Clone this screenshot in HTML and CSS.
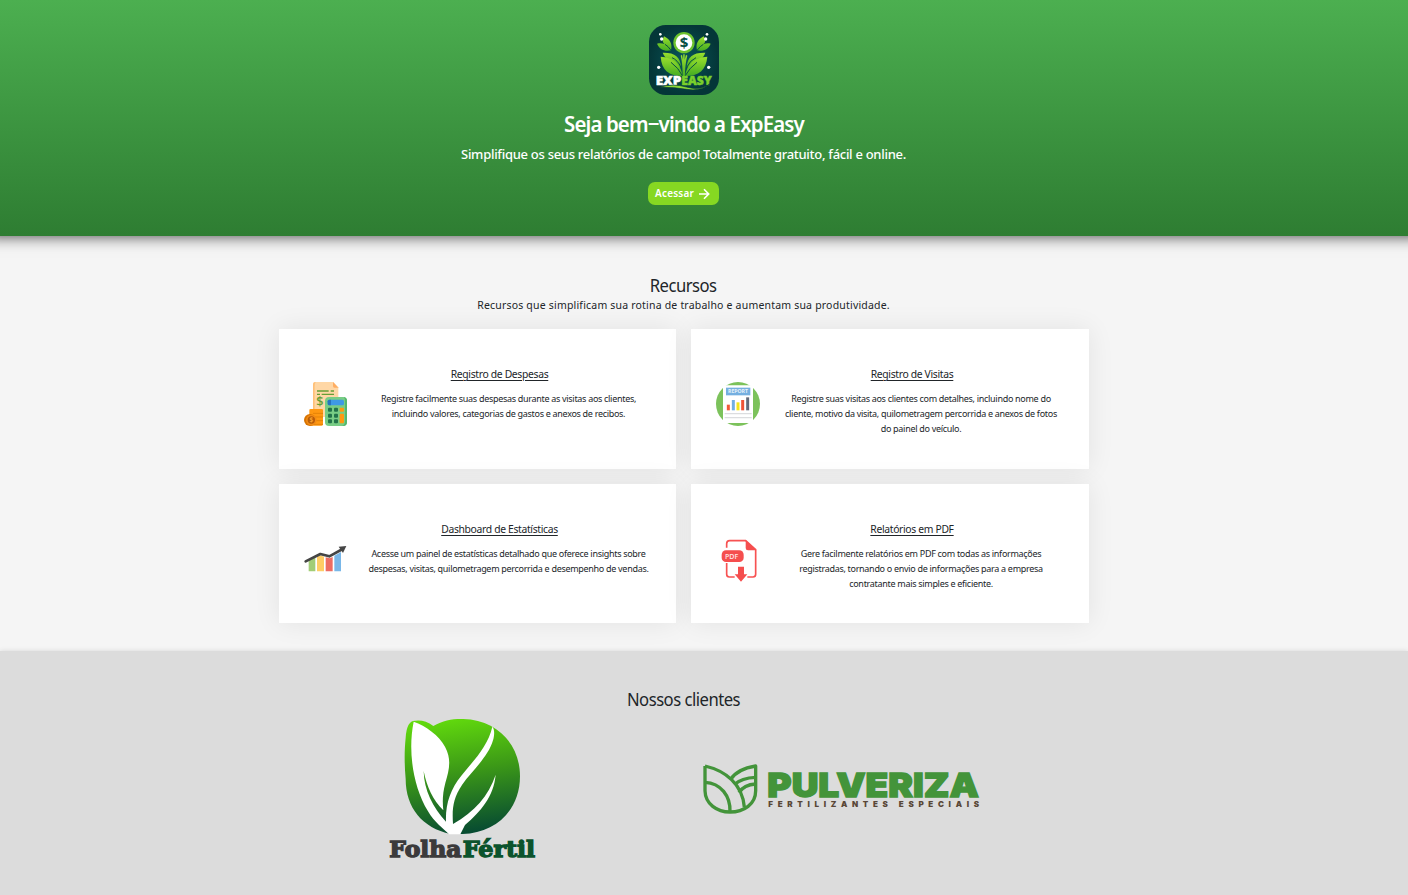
FILE: index.html
```html
<!DOCTYPE html>
<html lang="pt-BR">
<head>
<meta charset="utf-8">
<title>ExpEasy</title>
<link rel="stylesheet" href="styles.css">
</head>
<body>
<header class="hero">
  <svg class="hero-logo" viewBox="0 0 210 210">
    <defs>
      <linearGradient id="leaf" x1="0" y1="0" x2="0" y2="1"><stop offset="0" stop-color="#9be02d"/><stop offset="1" stop-color="#43ac22"/></linearGradient>
      <radialGradient id="night"><stop offset="0" stop-color="#08565a"/><stop offset="1" stop-color="#043638"/></radialGradient>
    </defs>
    <rect width="210" height="210" rx="50" fill="url(#night)"/>
    <g fill="url(#leaf)">
      <path d="M101 158C101 130 100 112 95 92L99 89 102 104 103 88H107V104L111 89 115 92C110 112 108 130 108 158Z"/>
      <path d="M96 127C94 95 77 82 41 83C50 103 66 121 96 127Z"/>
      <path d="M113 127C115 95 132 82 169 83C161 103 144 121 113 127Z"/>
      <path d="M101 153C95 115 72 98 35 95C38 135 59 153 101 153Z"/>
      <path d="M108 153C114 115 137 98 175 95C171 135 150 153 108 153Z"/>
      <path d="M66 76C71 57 63 43 45 34C39 46 41 54 48 58C39 54 32 54 24 56C31 72 47 81 66 76Z"/>
      <path d="M144 76C139 57 147 43 164 34C171 46 169 54 163 58C171 54 178 54 185 56C179 72 163 81 144 76Z"/>
    </g>
    <path d="M66 112Q88 128 101 153M144 112Q122 128 108 153M69 98Q86 105 96 127M141 98Q124 105 113 127M48 58Q57 63 66 76M163 58Q154 63 144 76" fill="none" stroke="#075044" stroke-width="3"/>
    <circle cx="105" cy="53" r="32" fill="#6cc22d"/><circle cx="105" cy="53" r="25" fill="#fff"/>
    <text class="logo-dollar" x="105" y="70" text-anchor="middle">$</text>
    <g fill="#fff"><circle cx="34" cy="28" r="4"/><circle cx="38" cy="42" r="5"/><circle cx="174" cy="28" r="4"/><circle cx="170" cy="42" r="5"/><circle cx="29" cy="127" r="5"/><circle cx="179" cy="127" r="5"/></g>
    <text class="logo-name" x="20" y="180" textLength="77" lengthAdjust="spacingAndGlyphs" fill="#fff" stroke="#fff">EXP</text>
    <text class="logo-name" x="97" y="180" textLength="91" lengthAdjust="spacingAndGlyphs" fill="#79cf2b" stroke="#79cf2b">EASY</text>
    <path d="M32 187Q72 174 112 186T183 177Q153 200 113 193T32 187Z" fill="#8bd936" stroke="#043638" stroke-width="2"/>
  </svg>
  <h1 class="hero-title">Seja bem−vindo a ExpEasy</h1>
  <p class="hero-text">Simplifique os seus relatórios de campo! Totalmente gratuito, fácil e online.</p>
  <a class="hero-button"><span>Acessar</span><svg class="arrow" viewBox="0 0 12 12"><path d="M1 6H10.5M6 1.3L10.7 6L6 10.7"/></svg></a>
</header>
<main class="features">
  <h2 class="section-title resources-title">Recursos</h2>
  <p class="section-text">Recursos que simplificam sua rotina de trabalho e aumentam sua produtividade.</p>
  <div class="grid">
    <article class="card">
      <svg class="card-icon" viewBox="0 0 132 132">
        <path d="M33 0H88L103 16V105H27V7Q27 0 33 0Z" fill="#ffd7a5"/><path d="M27 8Q27 0 35 0Q32 4 32 12V100H27Z" fill="#ffc078"/><path d="M87 0L103 17H91Q87 17 87 12Z" fill="#ffad62"/>
        <path d="M39 27H74M80 27H90M39 37H48M53 37H90" stroke="#659e35" stroke-width="4"/>
        <text class="receipt-dollar" x="37" y="73">$</text>
        <path d="M16 84Q16 81 20 81H53Q57 81 57 84V127Q57 131 53 131H20Q16 131 16 127Z" fill="#ff9811"/><path d="M27 94H57M27 105H57M27 116H57M27 127H57" stroke="#e58308" stroke-width="3"/>
        <circle cx="18" cy="114" r="18" fill="#d77300"/><circle cx="22" cy="114" r="16" fill="#f28b16"/><circle cx="22" cy="114" r="11" fill="#b65d08"/><text class="coin" x="22" y="121" text-anchor="middle">$</text>
        <rect x="63" y="45" width="66" height="87" rx="12" fill="#78cd85"/><path d="M117 45Q129 45 129 57V120Q129 132 117 132H111Q123 131 123 119V57Q123 46 117 45Z" fill="#54b66c"/>
        <rect x="71" y="53" width="49" height="17" rx="5" fill="#3e99e5"/><path d="M71 58Q71 53 76 53H81V70H76Q71 70 71 65Z" fill="#2874bd"/>
        <g fill="#22734a"><rect x="72" y="77" width="12" height="12" rx="3"/><rect x="90" y="77" width="12" height="12" rx="3"/><rect x="72" y="95" width="12" height="12" rx="3"/><rect x="90" y="95" width="12" height="12" rx="3"/><rect x="72" y="112" width="12" height="12" rx="3"/><rect x="90" y="112" width="12" height="12" rx="3"/></g>
        <rect x="107" y="77" width="13" height="12" rx="3" fill="#ff9811"/><rect x="107" y="95" width="13" height="29" rx="3" fill="#ff9811"/>
      </svg>
      <div class="card-body"><h3 class="card-title">Registro de Despesas</h3><p class="card-text">Registre facilmente suas despesas durante as visitas aos clientes,<br>incluindo valores, categorias de gastos e anexos de recibos.</p></div>
    </article>
    <article class="card">
      <svg class="card-icon" viewBox="0 0 132 132">
        <circle cx="66" cy="66" r="66" fill="#7cc25b"/><path d="M21 10H111V123H21Z" fill="#fff"/>
        <rect x="30" y="17" width="73" height="23" fill="#74afe0"/><text class="report" x="66" y="34" text-anchor="middle" textLength="60" lengthAdjust="spacingAndGlyphs">REPORT</text>
        <path d="M37 85V68" stroke="#f15a38" stroke-width="9"/><path d="M52 85V54" stroke="#72afe2" stroke-width="9"/><path d="M66 85V61" stroke="#f4e51c" stroke-width="9"/><path d="M80 85V54" stroke="#ef5336" stroke-width="9"/><path d="M95 85V46" stroke="#626a7a" stroke-width="9"/>
        <path d="M26 95H107M26 107H107" stroke="#dcdddf" stroke-width="4"/>
      </svg>
      <div class="card-body"><h3 class="card-title">Registro de Visitas</h3><p class="card-text">Registre suas visitas aos clientes com detalhes, incluindo nome do<br>cliente, motivo da visita, quilometragem percorrida e anexos de fotos<br>do painel do veículo.</p></div>
    </article>
    <article class="card">
      <svg class="card-icon" viewBox="0 0 132 132">
        <path d="M14 71L34 61V103H14Z" fill="#a2cd76"/><path d="M39 59L49 55 60 59V103H39Z" fill="#ffcd65"/><path d="M65 61L77 64 86 60V103H65Z" fill="#ed6c62"/><path d="M91 56L111 45V103H91Z" fill="#79b7e8"/>
        <path d="M5 73L49 51L76 58L116 36" fill="none" stroke="#454545" stroke-width="8" stroke-linecap="round" stroke-linejoin="round"/><path d="M104 29L127 27L117 48Z" fill="#454545"/>
      </svg>
      <div class="card-body"><h3 class="card-title">Dashboard de Estatísticas</h3><p class="card-text">Acesse um painel de estatísticas detalhado que oferece insights sobre<br>despesas, visitas, quilometragem percorrida e desempenho de vendas.</p></div>
    </article>
    <article class="card">
      <svg class="card-icon" viewBox="0 0 132 132">
        <path d="M32 32V20Q32 11 41 11H89L119 38V112Q119 120 111 120H94M32 78V112Q32 120 40 120H56" fill="none" stroke="#f75252" stroke-width="5"/>
        <path d="M89 9L121 40H96Q89 40 89 33Z" fill="#f54e4e"/><rect x="17" y="40" width="66" height="35" rx="13" fill="#f54e4e"/><text class="pdf" x="47" y="65" text-anchor="middle" textLength="40" lengthAdjust="spacingAndGlyphs">PDF</text>
        <path d="M66 89H84V112H94L75 134 56 112H66Z" fill="#f54e4e"/>
      </svg>
      <div class="card-body"><h3 class="card-title">Relatórios em PDF</h3><p class="card-text">Gere facilmente relatórios em PDF com todas as informações<br>registradas, tornando o envio de informações para a empresa<br>contratante mais simples e eficiente.</p></div>
    </article>
  </div>
</main>
<section class="clients">
  <h2 class="section-title clients-title">Nossos clientes</h2>
  <div class="client-list">
    <svg class="folha" viewBox="0 0 495 480">
      <defs><linearGradient id="folhaFill" x1=".4" y1="0" x2=".55" y2="1"><stop stop-color="#61d90d"/><stop offset=".45" stop-color="#3c9917"/><stop offset="1" stop-color="#064a32"/></linearGradient></defs>
      <path d="M77 83Q80 30 107 32Q134 29 160 48C190 31 219 26 250 27C351 30 420 102 420 199C420 302 345 370 248 372H212C127 354 77 293 77 207C73 165 73 120 77 83Z" fill="url(#folhaFill)"/>
      <path d="M101 35C137 47 178 77 195 110C216 148 207 181 196 219C188 249 187 275 190 301C158 269 141 232 131 183C132 241 159 293 198 335C196 282 211 238 244 197C277 155 323 112 337 50C345 59 343 77 339 91C324 143 274 183 246 225C219 265 216 296 219 342C285 304 325 258 347 194C341 260 302 304 255 345L241 373H207C190 355 163 337 144 304C99 230 83 123 101 35Z" fill="#fff"/>
      <text class="folha-name" x="28" y="440" textLength="216" lengthAdjust="spacingAndGlyphs" fill="#3b3a3b" stroke="#3b3a3b">Folha</text><text class="folha-name" x="248" y="440" textLength="217" lengthAdjust="spacingAndGlyphs" fill="#0b532d" stroke="#0b532d">Fértil</text>
    </svg>
    <svg class="pulveriza" viewBox="0 0 885 210">
      <g fill="none" stroke="#43943a" stroke-width="10" stroke-linejoin="round">
        <path d="M30 33V107C31 147 66 171 105 171C147 171 182 147 182 107V33C151 38 122 50 107 73"/>
        <path d="M30 33C91 47 142 87 148 156"/>
        <path d="M30 82C77 84 107 123 105 171"/>
        <path d="M119 88C135 73 158 68 182 67"/>
        <path d="M132 113C143 95 160 88 182 87"/>
      </g>
      <text class="pulveriza-name" x="217" y="125" textLength="635" lengthAdjust="spacingAndGlyphs">PULVERIZA</text>
      <text class="pulveriza-tag" x="220" y="155" textLength="632">FERTILIZANTES ESPECIAIS</text>
    </svg>
  </div>
</section>
</body>
</html>
```
FILE: styles.css
```css
* { box-sizing: border-box; }
body { margin: 0; height: 895px; overflow: hidden; background: #f5f5f5; color: #212529; font-family: "Noto Sans", sans-serif; }
h1, h2, h3, p { margin: 0; font-weight: 400; white-space: nowrap; }
svg { display: block; flex: none; overflow: visible; }
.hero { height: 236px; padding: 25px 41px 0 0; display: flex; flex-direction: column; align-items: center; color: #fff; background: linear-gradient(#4caf50, #2e7d32); box-shadow: 0 -15px 15px 15px rgba(0,0,0,.75); }
.hero-logo { width: 70px; height: 70px; }
.logo-dollar { font: 700 45px "Open Sans", sans-serif; fill: #075044; }
.logo-name { font: 800 36px "Open Sans", sans-serif; stroke-width: 1.5px; }
.hero-title { margin-top: 12px; font-size: 22px; line-height: 32px; font-weight: 600; letter-spacing: -.95px; transform: scaleX(.93); }
.hero-text { margin-top: 5px; font-size: 13px; line-height: 20px; font-weight: 500; letter-spacing: -.285px; }
.hero-button { width: 71px; height: 23px; margin-top: 18px; padding-left: 7px; display: flex; align-items: center; gap: 4px; border-radius: 7px; background: #86d822; font-size: 10px; line-height: 14px; font-weight: 600; letter-spacing: .2px; }
.hero-button span { margin-top: -1px; }
.arrow { width: 12px; height: 12px; fill: none; stroke: #fff; stroke-width: 1.6; }
.features { height: 415px; padding: 37px 41px 0 0; display: flex; flex-direction: column; align-items: center; }
.section-title { font-size: 18px; line-height: 24px; letter-spacing: -.55px; }
.resources-title { transform: scaleX(.925); }
.section-text { font-size: 10.5px; line-height: 16px; letter-spacing: .195px; }
.grid { width: 810px; margin: 16px 0 0 1px; display: grid; grid-template-columns: 397px 398px; grid-template-rows: 140px 139px; gap: 15px; }
.card { display: flex; align-items: flex-start; padding: 37px 25px; background: #fff; box-shadow: 0 0 25px rgba(0,0,0,.08); }
.card-icon { width: 44px; height: 44px; margin-top: 16px; }
.card-body { flex: 1; }
.card-title { font-size: 11px; line-height: 16px; text-align: center; text-decoration: underline; text-underline-offset: 2px; letter-spacing: -.35px; transform: scaleX(.94); }
.card-text { margin: 9px 0 0 18px; text-align: center; font-size: 9px; line-height: 15px; letter-spacing: -.3px; }
.clients { height: 244px; padding-top: 36px; background: #dcdcdc; box-shadow: 0 0 5px rgba(0,0,0,.12); }
.clients-title { width: 1367px; text-align: center; transform: scaleX(.925); }
.client-list { padding-left: 380px; margin-top: -1px; display: flex; align-items: center; gap: 150px; }
.folha { width: 165px; height: 160px; }
.pulveriza { width: 295px; height: 70px; }
.receipt-dollar { font: 600 38px "Open Sans", sans-serif; fill: #659e35; }
.coin { font: 700 19px "Open Sans", sans-serif; fill: #f7a032; }
.report { font: 700 16px "Open Sans", sans-serif; fill: #e9f2fa; }
.pdf { font: 600 22px "Open Sans", sans-serif; fill: #ffe6e6; }
.folha-name { font: 700 66px "DejaVu Serif", serif; stroke-width: 4px; }
.pulveriza-name { font: 900 99px Inter, sans-serif; fill: #43943a; stroke: #43943a; stroke-width: 4px; }
.pulveriza-tag { font: 900 24px Inter, sans-serif; fill: #594737; }
```
